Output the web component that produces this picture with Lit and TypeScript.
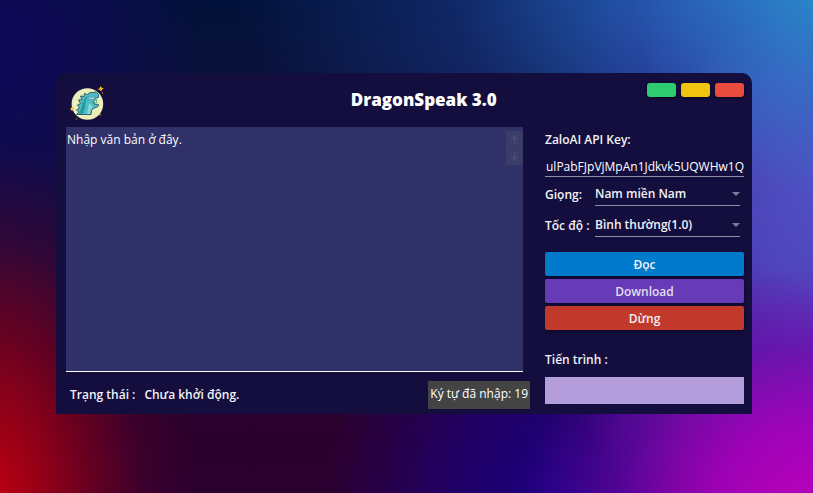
import { LitElement, html, css, svg } from "lit";
import { customElement, state } from "lit/decorators.js";

const dragonLogo = svg`
  <circle cx="17.4" cy="18" r="15.8" fill="#e9efb6" />
  <path d="M6.5 28.5 L9 26 L6.5 24 L9.5 22 L7.5 19 L10.5 17.5 L8.5 14 L12 13.5 L10.5 10 L14 10.5 L14.5 7.5 L17.5 8.5 L20 6.5 L24 6.5 L26 5.5 L28.5 8.5 L28.5 11.5 L26 12 L23.5 15 L24 18 L28.5 18.5 L28 20.5 L23.5 22.5 L21.5 24.5 L21 28.5 Z"
    fill="#4fbcc4" stroke="#2c5566" stroke-width="0.9" stroke-linejoin="round" />
  <path d="M8.5 28 L11 23 L12.5 17 L15 12 L18 10 L15.5 16 L15 22 L12.5 28 Z" fill="#279aa3" />
  <path d="M17 28 L18 22 L19.5 17 L21.5 19.5 L23 20 L20.5 23.5 L20 28 Z" fill="#86dad8" />
  <path d="M18 10.5 L21.5 12 L25.5 10 L23 13.5 L19.5 13 Z" fill="#d9f4f5" stroke="#3d7c99" stroke-width="0.5" />
  <path d="M24 15.5 L26.5 13.5 L27 16.5 L24.5 17 Z" fill="#f2fbe8" stroke="#2ba67b" stroke-width="0.8" />
  <circle cx="5" cy="16.5" r="0.9" fill="#fff" />
  <circle cx="29.5" cy="12.5" r="0.9" fill="#fff" />
  <path d="M30.5 0 L31.7 1.6 L33.8 2.4 L32.2 3.6 L31.2 5.4 L29.8 4 L27.5 3.4 L29.6 2.2 Z" fill="#f0ad1d" />
  <circle cx="32.5" cy="7" r="0.7" fill="#c98b22" />
  <circle cx="2.2" cy="23" r="1.7" fill="#f2c14a" />
  <circle cx="30" cy="28.5" r="1" fill="#d09a2a" />
  <circle cx="6.5" cy="33" r="0.7" fill="#a87a24" />
`;

@customElement("app-root")
export class AppRoot extends LitElement {
  @state() private text = "Nhập văn bản ở đây.";

  static styles = css`
    :host {
      display: block;
      box-sizing: border-box;
      min-height: 100vh;
      padding: 73px 61px 79px 56px;
      font: 600 12px/16px "Open Sans", "Noto Sans", sans-serif;
      color: #f2f2f5;
      background:
        radial-gradient(ellipse 26% 75% at -2% 104%, #c80010 0%, #b40010d0 25%, #8c0018a0 50%, #60002850 75%, #40003000 100%),
        radial-gradient(ellipse 36% 50% at 100% 104%, #bc00bc 0%, #a800bce0 35%, #7408b090 68%, #4008a000 100%),
        radial-gradient(ellipse 25% 46% at 102% -6%, #2890cc 0%, #2888cc90 45%, #2870c000 100%),
        radial-gradient(ellipse 40% 60% at 106% 36%, #5254c8 0%, #4c4cc0d8 40%, #3838a878 65%, #2030a000 100%),
        radial-gradient(ellipse 34% 50% at 104% 70%, #7a1cb8 0%, #6c1cb4d0 45%, #4010a000 100%),
        radial-gradient(ellipse 66% 70% at 95% -4%, #2868c0 0%, #2458b0e0 30%, #1c3c9080 60%, #18287000 100%),
        radial-gradient(ellipse 25% 50% at 0% 10%, #10085a 0%, #10085a90 50%, #10085a00 100%),
        radial-gradient(ellipse 28% 50% at 68% 100%, #1c0080 0%, #1c007cb0 45%, #1c007800 100%),
        linear-gradient(180deg, #02123a 0%, #101038 30%, #200838 60%, #2c002c 88%, #2c0030 100%);
    }
    * { box-sizing: border-box; }
    .window {
      padding: 0 8px 5px 10px;
      background: #130e3e;
      border-radius: 10px 10px 0 0;
    }
    .header {
      display: grid;
      grid-template-columns: 42% 1fr auto;
      height: 54px;
    }
    .logo { width: 34px; height: 34px; margin: 13px 0 0 4px; }
    .title {
      margin: 15px 0 0;
      font-size: 17px;
      line-height: 24px;
      font-weight: 800;
      color: #fff;
      white-space: nowrap;
    }
    .controls { display: flex; gap: 5px; padding-top: 10px; }
    button {
      border: 0;
      padding: 0;
      border-radius: 3px;
      font: inherit;
      color: inherit;
      box-shadow: 0 1px 3px #0008;
    }
    .control { width: 29px; height: 14px; }
    .green { background: #2ecc71; }
    .yellow { background: #f1c40f; }
    .red { background: #e74c3c; }
    .body { display: grid; grid-template-columns: 1fr 199px; gap: 15px; }
    .left { display: flex; flex-direction: column; min-width: 0; }
    .editor { position: relative; flex: 1; display: flex; margin-right: 7px; }
    .text {
      flex: 1;
      min-width: 0;
      margin: 0;
      padding: 5px 20px 5px 1px;
      border: 0;
      border-bottom: 1px solid #fff;
      border-radius: 0;
      outline: 0;
      resize: none;
      background: #303169;
      color: #fff;
      font: inherit;
      font-weight: 400;
    }
    .scroller {
      position: absolute;
      top: 4px;
      right: 0;
      display: flex;
      flex-direction: column;
      background: #3c3c69;
    }
    .step {
      width: 17px;
      height: 17px;
      display: grid;
      place-items: center;
      background: none;
      box-shadow: none;
    }
    .footer { display: flex; align-items: center; height: 28px; margin-top: 9px; padding-left: 4px; }
    .status { flex: 1; display: flex; gap: 9px; }
    .counter {
      padding: 5px 2px 7px;
      background: #444;
      color: #fff;
      font-weight: 400;
      white-space: nowrap;
    }
    .side { display: flex; flex-direction: column; padding-bottom: 5px; }
    .label { margin-top: 5px; }
    .key-box { height: 23px; margin-top: 6px; border-bottom: 1px solid #918fa5; }
    .key {
      display: block;
      width: 100%;
      height: 20px;
      padding: 4px 0 0 1px;
      border: 0;
      outline: 0;
      background: none;
      color: #fff;
      font: inherit;
      font-weight: 400;
    }
    .row { display: grid; grid-template-columns: 50px 1fr; padding-right: 4px; align-items: center; white-space: nowrap; }
    .voice { margin-top: 6px; }
    .speed { margin-top: 8px; }
    .pick { display: grid; align-items: center; border-bottom: 1px solid #918fa5; }
    .select, .arrow { grid-area: 1 / 1; }
    .select {
      appearance: none;
      width: 100%;
      height: 22px;
      padding: 0 12px 0 0;
      border: 0;
      outline: 0;
      background: none;
      color: inherit;
      font: inherit;
    }
    .option { background: #130e3e; }
    .arrow { justify-self: end; pointer-events: none; }
    .actions { display: grid; gap: 3px; margin-top: 15px; }
    .action { height: 24px; border-radius: 2px; padding-top: 2px; }
    .read { background: #007acc; }
    .download { background: #673ab7; color: #e4def2; }
    .stop { background: #c0392b; }
    .progress-label { margin-top: 22px; }
    .progress {
      appearance: none;
      display: block;
      width: 100%;
      height: 27px;
      margin-top: 9px;
      border: 0;
      background: #b39ddb;
    }
    .progress::-webkit-progress-bar { background: #b39ddb; }
    .progress::-webkit-progress-value { background: #673ab7; }
  `;

  private onInput(e: Event) {
    this.text = (e.target as HTMLTextAreaElement).value;
  }

  private arrow() {
    return html`<svg class="arrow" width="8" height="5" viewBox="0 0 8 5" aria-hidden="true">
      <path d="M0 0H8L4 4Z" fill="#7f7d95" />
    </svg>`;
  }

  render() {
    return html`
      <main class="window">
        <header class="header">
          <svg class="logo" viewBox="0 0 34 34" aria-hidden="true">${dragonLogo}</svg>
          <h1 class="title">DragonSpeak 3.0</h1>
          <div class="controls">
            <button class="control green" aria-label="Thu nhỏ"></button>
            <button class="control yellow" aria-label="Phóng to"></button>
            <button class="control red" aria-label="Đóng"></button>
          </div>
        </header>
        <div class="body">
          <section class="left">
            <div class="editor">
              <textarea class="text" aria-label="Văn bản" spellcheck="false" .value=${this.text} @input=${this.onInput}></textarea>
              <div class="scroller">
                <button class="step" aria-label="Lên">
                  <svg width="9" height="9" viewBox="0 0 9 9" fill="none" stroke="#4c4c77" stroke-width="1.6"><path d="M4.5 9V1M1 4.5L4.5 1L8 4.5" /></svg>
                </button>
                <button class="step" aria-label="Xuống">
                  <svg width="9" height="9" viewBox="0 0 9 9" fill="none" stroke="#4c4c77" stroke-width="1.6"><path d="M4.5 0V8M1 4.5L4.5 8L8 4.5" /></svg>
                </button>
              </div>
            </div>
            <footer class="footer">
              <div class="status"><span>Trạng thái :</span><span>Chưa khởi động.</span></div>
              <div class="counter">Ký tự đã nhập: ${this.text.length}</div>
            </footer>
          </section>
          <section class="side">
            <label class="label" for="key">ZaloAI API Key:</label>
            <div class="key-box">
              <input class="key" id="key" type="text" spellcheck="false" value="ulPabFJpVjMpAn1Jdkvk5UQWHw1Q" />
            </div>
            <div class="row voice">
              <label for="voice">Giọng:</label>
              <div class="pick">
                <select class="select" id="voice"><option class="option">Nam miền Nam</option></select>
                ${this.arrow()}
              </div>
            </div>
            <div class="row speed">
              <label for="speed">Tốc độ :</label>
              <div class="pick">
                <select class="select" id="speed"><option class="option">Bình thường(1.0)</option></select>
                ${this.arrow()}
              </div>
            </div>
            <div class="actions">
              <button class="action read">Đọc</button>
              <button class="action download">Download</button>
              <button class="action stop">Dừng</button>
            </div>
            <label class="progress-label" for="progress">Tiến trình :</label>
            <progress class="progress" id="progress" max="100" value="0"></progress>
          </section>
        </div>
      </main>
    `;
  }
}
